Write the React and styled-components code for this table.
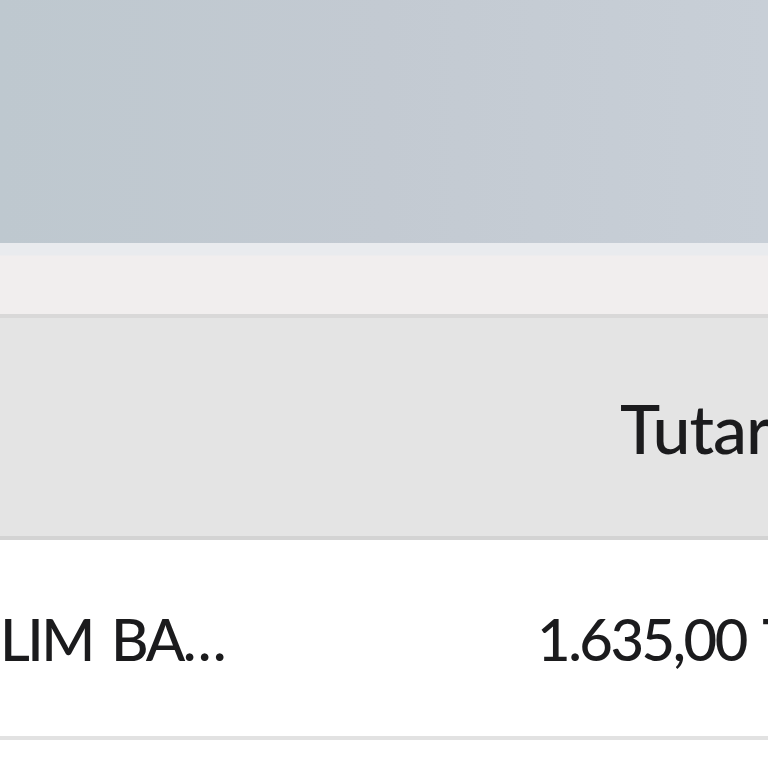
import styled, { createGlobalStyle } from "styled-components";

const GlobalStyle = createGlobalStyle`
  html, body {
    margin: 0;
    padding: 0;
    background: #ffffff;
    overflow: hidden;
  }
  body {
    font-family: "Lato", "Noto Sans", sans-serif;
    color: #1b1b1d;
  }
`;

const Page = styled.div`
  width: 768px;
  height: 768px;
  overflow: hidden;
  display: flex;
  flex-direction: column;
`;

const Banner = styled.div`
  height: 243px;
  flex-shrink: 0;
  background: linear-gradient(90deg, #bec8cf 0%, #c3cad2 50%, #c8cfd7 100%);
`;

const Toolbar = styled.div`
  height: 71px;
  flex-shrink: 0;
  background: linear-gradient(180deg, #e9ebee 0px, #e9ebee 12px, #f1eeee 13px, #f1eeee 100%);
  border-bottom: 4px solid #d9d8d8;
`;

const Table = styled.div`
  width: 1000px;
  display: grid;
  grid-template-columns: 537px 1fr;
`;

const HeaderRow = styled.div`
  display: contents;
`;

const HeaderCell = styled.div`
  height: 218px;
  background: #e4e4e4;
  border-bottom: 4px solid #d3d3d3;
  display: flex;
  align-items: center;
  padding-left: ${(p) => p.$indent || 0}px;
  font-size: 68px;
  font-weight: 500;
  letter-spacing: -1px;
  white-space: nowrap;
  overflow: hidden;
`;

const BodyRow = styled.div`
  display: contents;
`;

const Cell = styled.div`
  height: 196px;
  background: #ffffff;
  border-bottom: 4px solid #e2e2e2;
  display: flex;
  align-items: center;
  padding-left: ${(p) => p.$indent || 0}px;
  font-size: 58px;
  font-weight: 500;
  letter-spacing: -2.5px;
  word-spacing: 6px;
  white-space: nowrap;
  overflow: hidden;
`;

export default function App() {
  return (
    <Page>
      <GlobalStyle />
      <Banner />
      <Toolbar />
      <Table>
        <HeaderRow>
          <HeaderCell />
          <HeaderCell $indent={83}>Tutar</HeaderCell>
        </HeaderRow>
        <BodyRow>
          <Cell>LIM BA…</Cell>
          <Cell>1.635,00 TL</Cell>
        </BodyRow>
      </Table>
    </Page>
  );
}
